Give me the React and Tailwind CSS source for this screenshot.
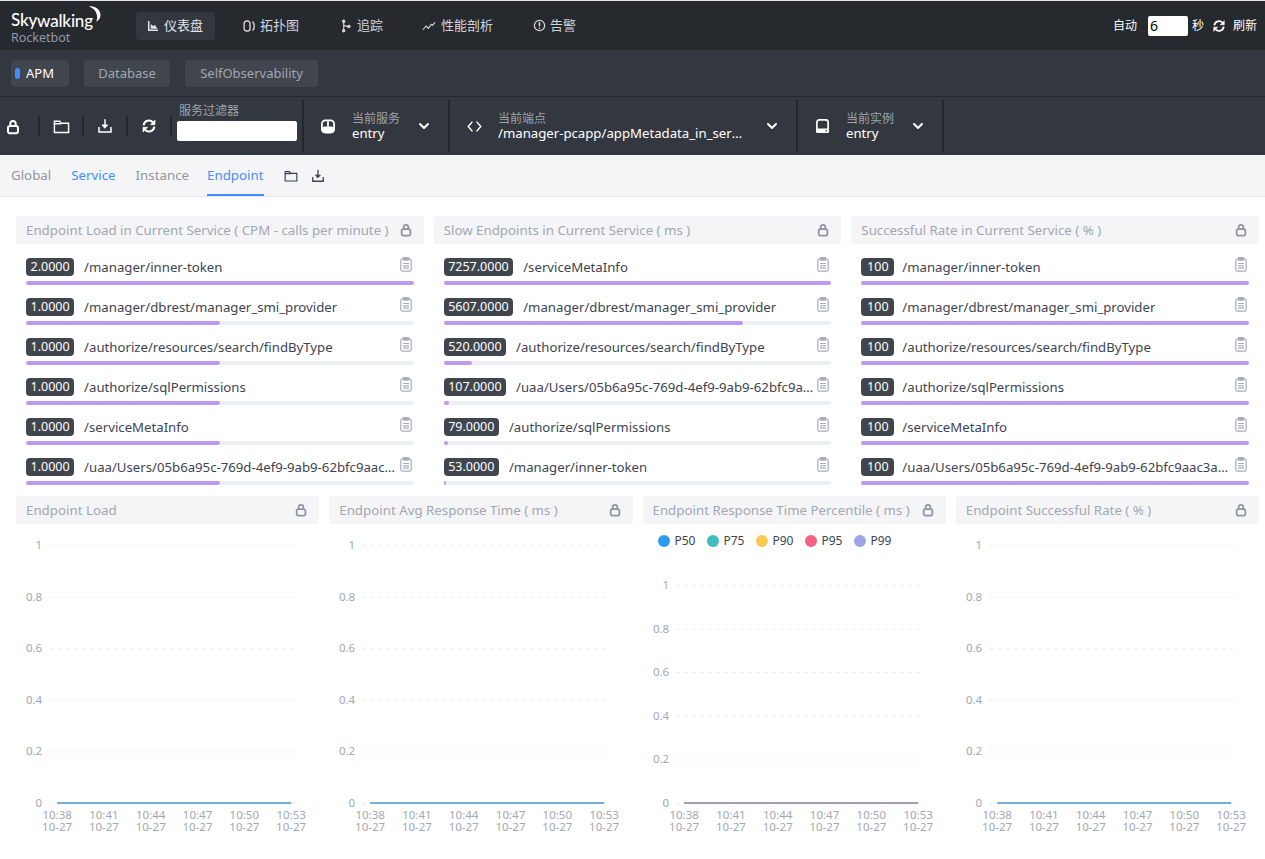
import React from "react";
import { ChevronDown } from "lucide-react";

const S = ({ children, className = "w-4 h-4", vb = "0 0 24 24" }) => (
  <svg viewBox={vb} fill="none" stroke="currentColor" strokeWidth="2.4" strokeLinecap="round" strokeLinejoin="round" className={`shrink-0 ${className}`}>{children}</svg>
);
const Lock = ({ className }) => (
  <S className={className}><rect x="4.5" y="10.5" width="15" height="11" rx="3" strokeWidth="3" /><path strokeWidth="3" d="M8 10.5V7a4 4 0 0 1 8 0v3.5" /></S>
);
const Folder = ({ className }) => (
  <S className={className}><path strokeWidth="2" strokeLinejoin="miter" d="M2 20.5V4.5h7.5l2 3H22v13z" /><path strokeWidth="2" d="M2 8h9" /></S>
);
const Download = ({ className }) => (
  <S className={className}><path strokeWidth="2.2" d="M12 2.5V13" /><path fill="currentColor" strokeWidth="1.4" d="M8 10.5h8L12 15z" /><path strokeWidth="2.2" strokeLinejoin="miter" strokeLinecap="butt" d="M3 13.5v7.5h18v-7.5" /></S>
);
const Refresh = ({ className }) => (
  <S className={className}><path strokeWidth="3" strokeLinecap="butt" d="M20 13a8 8 0 0 1-14 4.5M4 11a8 8 0 0 1 14-4.5" /><path fill="currentColor" strokeWidth="1" d="M21 3.5v6.5h-6.5zM3 20.5V14h6.5z" /></S>
);
const Clip = () => (
  <svg viewBox="0 0 12 15" className="w-3 h-[15px] shrink-0 text-[#a9adb6]" fill="none" stroke="currentColor" strokeWidth="1.2">
    <rect x="0.8" y="2" width="10.4" height="12.2" rx="1.6" />
    <rect x="3.2" y="0.6" width="5.6" height="2.6" rx="0.8" fill="currentColor" />
    <path d="M3 6.5h6M3 8.8h6M3 11.1h6" />
  </svg>
);

const navIcons = {
  dash: <svg viewBox="0 0 11 11" className="w-[10px] h-[10px] shrink-0" fill="currentColor"><path d="M0 0h1.6v9.4H11V11H0z" /><path d="M3 8.5V3.2l2.6 2.3 2-1L10.5 8.5z" /></svg>,
  topo: <S className="w-[14px] h-[14px]"><rect x="2" y="3.5" width="10" height="17" rx="4" strokeWidth="2.4" /><path strokeWidth="2.4" d="M17 5c3 3 3 11 0 14" /></S>,
  trace: <S className="w-[14px] h-[14px]"><path strokeWidth="2" d="M8 4v16M8 11l8 2" /><circle cx="8" cy="4" r="1.8" fill="currentColor" /><circle cx="8" cy="20" r="1.8" fill="currentColor" /><circle cx="17" cy="13" r="1.8" fill="currentColor" /></S>,
  prof: <S className="w-[14px] h-[14px]"><path strokeWidth="2" d="M2 18l5-6 4 4 5-7 2 2 4-5" /></S>,
  alarm: <S className="w-[13px] h-[13px]"><circle cx="12" cy="12" r="9.5" strokeWidth="2.4" /><path strokeWidth="3" d="M12 7v5.5M12 17v.2" /></S>,
};

const Nav = ({ icon, label, active, w, gap }) => (
  <div className={`h-7 flex items-center rounded-[4px] px-3 text-[13px] whitespace-nowrap ${gap} ${active ? "bg-[#333840] text-[#e2e4e8]" : "text-[#d2d4d9]"} ${w}`}>
    {navIcons[icon]}
    <span>{label}</span>
  </div>
);

const Group = ({ icon, label, value, w, tw }) => (
  <div className={`h-[52px] flex items-center border-r-2 border-[#23262b] pl-[17px] pr-4 shrink-0 ${w}`}>
    <span className="w-[31px] shrink-0 text-white flex justify-start">{icon}</span>
    <div className="flex-1 min-w-0 leading-4">
      <div className="text-[12px] text-[#9da3ad]">{label}</div>
      <div className={`text-[13.2px] text-white truncate -mt-[2px] ${tw}`}>{value}</div>
    </div>
    <ChevronDown className="w-4 h-4 text-white shrink-0" strokeWidth={3} />
  </div>
);

const uaa = "/uaa/Users/05b6a95c-769d-4ef9-9ab9-62bfc9aac3a9/permissions";
const paths = ["/manager/inner-token", "/manager/dbrest/manager_smi_provider", "/authorize/resources/search/findByType", "/authorize/sqlPermissions", "/serviceMetaInfo"];
const load = [
  ["2.0000", paths[0], 100],
  ["1.0000", paths[1], 50],
  ["1.0000", paths[2], 50],
  ["1.0000", paths[3], 50],
  ["1.0000", paths[4], 50],
  ["1.0000", uaa, 50],
];
const slow = [
  ["7257.0000", paths[4], 100],
  ["5607.0000", paths[1], 77.3],
  ["520.0000", paths[2], 7.2],
  ["107.0000", uaa, 1.5],
  ["79.0000", paths[3], 1.1],
  ["53.0000", paths[0], 0.7],
];
const rate = [
  ["100", paths[0], 100],
  ["100", paths[1], 100],
  ["100", paths[2], 100],
  ["100", paths[3], 100],
  ["100", paths[4], 100],
  ["100", uaa, 100],
];

const Title = ({ children }) => (
  <div className="h-7 bg-[#f5f5f8] rounded-[2px] flex items-center justify-between pl-[10px] pr-[11px] text-[13.3px] text-[#a2a7b2]">
    <span className="truncate pt-[1px]">{children}</span>
    <Lock className="w-[14px] h-[14px] text-[#8f94a0] ml-[5px]" />
  </div>
);

const ListCard = ({ title, rows, gap }) => (
  <div className="min-w-0">
    <Title>{title}</Title>
    <div className="pt-[13px] px-[10px]">
      {rows.map(([v, p, pct], i) => (
        <div key={i} className="h-10">
          <div className="h-[24px] flex items-start justify-between">
            <div className="flex items-center min-w-0 flex-1 pt-[1px]">
              <span className="bg-[#40454e] text-white text-[12.5px] text-center leading-[18px] h-[18px] min-w-[33px] px-[4.5px] rounded-[4px] shrink-0">{v}</span>
              <span className={`${gap} text-[13.2px] leading-[18px] text-[#3d444f] truncate`}>{p}</span>
            </div>
            <span className="pl-[3px] pr-[2px]"><Clip /></span>
          </div>
          <div className="h-1 rounded-full bg-[#eeeff5]">
            <div className="h-1 rounded-full bg-[#bf99f0]" style={{ width: `${pct}%` }} />
          </div>
        </div>
      ))}
    </div>
  </div>
);

const times = ["10:38", "10:41", "10:44", "10:47", "10:50", "10:53"];
const yTicks = ["1", "0.8", "0.6", "0.4", "0.2", "0"];

const Chart = ({ top = 21, line = "#74add8", height = 317 }) => {
  const bottom = 279;
  const step = (bottom - top) / 5;
  const x0 = 41, x1 = 275;
  return (
    <svg viewBox={`0 0 303 ${height}`} className="w-full" style={{ height }}>
      {yTicks.map((t, i) => {
        const y = top + step * i;
        return (
          <g key={t}>
            <text x="26" y={y + 4} textAnchor="end" fontSize="11.5" fill="#a2a7b2" fontFamily="Noto Sans">{t}</text>
            <line x1="33" x2="281" y1={y + 0.5} y2={y + 0.5} stroke="#eeeeee" strokeDasharray="4 4" />
          </g>
        );
      })}
      <line x1={x0} x2={x1} y1={bottom} y2={bottom} stroke={line} strokeWidth="2" />
      {times.map((t, i) => {
        const x = x0 + ((x1 - x0) / 5) * i;
        return (
          <g key={t} fontSize="11.5" fill="#a2a7b2" textAnchor="middle" fontFamily="Noto Sans">
            <text x={x} y={295}>{t}</text>
            <text x={x} y={307}>10-27</text>
          </g>
        );
      })}
    </svg>
  );
};

const legend = [["P50", "#2d9cf0"], ["P75", "#3fbcc0"], ["P90", "#ffc84f"], ["P95", "#f7617f"], ["P99", "#9da5e4"]];

export default function App() {
  return (
    <div className="w-[1265px] h-[859px] overflow-hidden bg-white" style={{ fontFamily: '"Noto Sans","Noto Sans CJK SC",sans-serif' }}>
      <header className="h-[50px] border-t border-[#e5e5e5] bg-[#26292e] flex items-center justify-between pl-[11px] pr-2 text-white">
        <div className="flex items-center">
          <div className="w-[125px] leading-none relative pt-[4px]">
            <div className="text-[17px] font-medium text-white h-[20px] leading-[20px] tracking-[-0.2px]" style={{ fontFamily: "Lato, sans-serif" }}>
              Sky<span className="relative top-[1px]">walking</span>
            </div>
            <svg viewBox="0 0 14 16" className="absolute left-[76px] top-0 w-[14px] h-[16px]"><path d="M2 0.5c6-1 11 3 11.5 8 .2 3-1.5 6-4.5 7.2 1-1.5 1.5-3.5 1-6C9.500 5.500 6.500 2 2 0.5z" fill="#fff" /></svg>
            <div className="text-[12.5px] text-[#8c9ab0] leading-[14px] mt-[1px]">Rocketbot</div>
          </div>
          <div className="flex items-center">
            <Nav icon="dash" label="仪表盘" active gap="gap-[6px]" w="w-[79px] shrink-0" />
            <Nav icon="topo" label="拓扑图" gap="gap-[3px]" w="ml-4" />
            <Nav icon="trace" label="追踪" gap="gap-1" w="ml-4" />
            <Nav icon="prof" label="性能剖析" gap="gap-[5px]" w="ml-[15px]" />
            <Nav icon="alarm" label="告警" gap="gap-1" w="ml-4" />
          </div>
        </div>
        <div className="flex items-center text-[12px]">
          <span className="pt-[1px]">自动</span>
          <input readOnly value="6" className="ml-[11px] w-10 h-5 bg-white rounded-[2px] text-black text-[14px] px-[2px] outline-none" />
          <span className="ml-1">秒</span>
          <Refresh className="w-[14px] h-[14px] ml-[8px]" />
          <span className="ml-[7px]">刷新</span>
        </div>
      </header>

      <div className="h-[47px] bg-[#333840] border-b border-[#23262b] flex items-center pl-[11px] gap-[15px] text-[13px] pt-[1px]">
        <div className="h-[27px] w-[58px] rounded-[4px] bg-[#40454e] flex items-center text-white pl-[4px]">
          <span className="w-[5px] h-[11px] rounded-full bg-[#448dfe] mr-[6px]" />APM
        </div>
        <div className="h-[27px] w-[86px] rounded-[4px] bg-[#40454e] flex items-center justify-center text-[#a2a7b2]">Database</div>
        <div className="h-[27px] w-[133px] rounded-[4px] bg-[#40454e] flex items-center justify-center text-[#a2a7b2]">SelfObservability</div>
      </div>

      <div className="h-[58px] bg-[#333840] flex items-center text-white">
        <div className="flex items-center w-[177px] shrink-0">
          {[<Lock className="w-4 h-4 mt-[1px]" />, <Folder className="w-[17px] h-[17px]" />, <Download className="w-4 h-4" />, <Refresh className="w-4 h-4" />].map((ic, i) => (
            <div key={i} className={`h-5 flex items-center justify-center ${i === 0 ? "pr-[12px] w-[40px]" : "w-11"} border-r-2 border-[#23262b]`}>{ic}</div>
          ))}
        </div>
        <div className="w-[127px] h-[52px] border-r-2 border-[#23262b] shrink-0 flex flex-col">
          <div className="pl-[2px] pt-[3px] text-[12px] leading-4 text-[#9da3ad]">服务过滤器</div>
          <div className="w-[120px] h-5 mt-[2px] bg-white rounded-[2px]" />
        </div>
        <Group w="w-[146px]" label="当前服务" value="entry" icon={<svg viewBox="0 0 16 16" className="w-[14px] h-[15px]" fill="none"><rect x="1" y="1" width="14" height="14" rx="4" stroke="#fff" strokeWidth="2" /><rect x="1" y="8" width="14" height="7" rx="3" fill="#fff" /><path d="M8 2v6" stroke="#fff" strokeWidth="2" /></svg>} />
        <Group w="w-[348px]" tw="w-[250px]" label="当前端点" value="/manager-pcapp/appMetadata_in_service_info" icon={<S className="w-[15px] h-[15px]"><path strokeWidth="2.4" d="M8 5l-6 7 6 7M16 5l6 7-6 7" /></S>} />
        <Group w="w-[146px]" label="当前实例" value="entry" icon={<svg viewBox="0 0 16 16" className="w-[15px] h-[15px]" fill="none"><rect x="2" y="1" width="12" height="11" rx="2.5" stroke="#fff" strokeWidth="1.8" /><rect x="1" y="10" width="14" height="5" rx="1.8" fill="#fff" /><circle cx="12" cy="12.5" r="0.9" fill="#333840" /></svg>} />
      </div>

      <div className="h-[42px] bg-[#f5f5f8] border-b border-[#e5e5ea] flex pl-[11px] text-[13.3px] text-[#9296a0]">
        <div className="h-full flex items-center mr-5">Global</div>
        <div className="h-full flex items-center mr-5 text-[#448dfe]">Service</div>
        <div className="h-full flex items-center mr-[18px]">Instance</div>
        <div className="h-full flex items-center text-[#448dfe] border-b-2 border-[#448dfe] pt-[2px]">Endpoint</div>
        <div className="h-full flex items-center ml-5 gap-[13px] text-[#3d444f]">
          <Folder className="w-[14px] h-[14px]" />
          <Download className="w-[14px] h-[14px]" />
        </div>
      </div>

      <div className="pl-[16px] pr-[6px] pt-[19px]">
        <div className="grid grid-cols-3 gap-[10px] h-[280px]">
          <ListCard gap="ml-[10px]" title="Endpoint Load in Current Service ( CPM - calls per minute )" rows={load} />
          <ListCard gap="ml-[10px]" title="Slow Endpoints in Current Service ( ms )" rows={slow} />
          <ListCard gap="ml-2" title="Successful Rate in Current Service ( % )" rows={rate} />
        </div>
        <div className="grid grid-cols-4 gap-[10px]">
          <div><Title>Endpoint Load</Title><Chart /></div>
          <div><Title>Endpoint Avg Response Time ( ms )</Title><Chart /></div>
          <div className="relative">
            <Title>Endpoint Response Time Percentile ( ms )</Title>
            <div className="absolute left-[15px] top-[37px] flex gap-[11px] text-[12px] leading-4 text-[#3d444f]">
              {legend.map(([n, c]) => (
                <span key={n} className="flex items-center gap-[5px]">
                  <span className="w-3 h-3 rounded-full" style={{ background: c }} />{n}
                </span>
              ))}
            </div>
            <Chart top={61} line="#a79bb8" />
          </div>
          <div><Title>Endpoint Successful Rate ( % )</Title><Chart /></div>
        </div>
      </div>
    </div>
  );
}
